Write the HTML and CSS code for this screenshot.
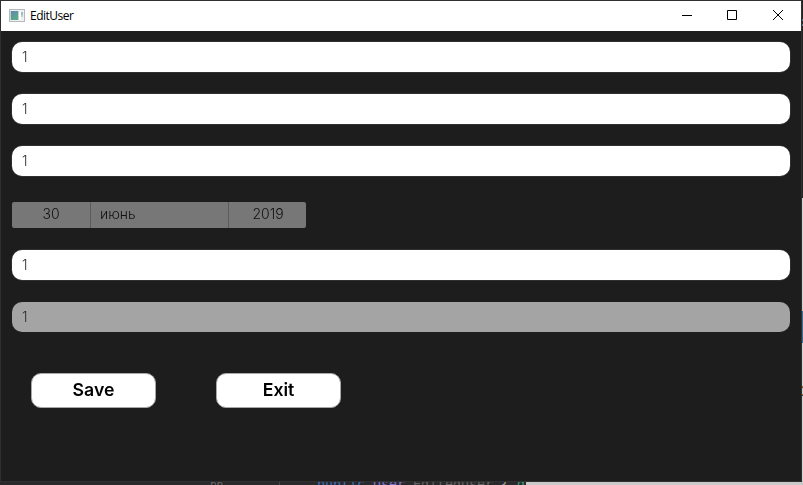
FILE: index.html
```
<!DOCTYPE html>
<html lang="ru">
<head>
<meta charset="utf-8">
<title>EditUser</title>
<link rel="stylesheet" href="styles.css">
</head>
<body>
<div class="desktop">
  <div class="side"><div class="side-dark"><span class="colon">:</span></div><div class="side-light"><div class="side-blue"></div><span class="side-num">2</span></div></div>
  <div class="code"><div class="code-dark"><span class="lineno">bb</span><span class="guide"></span><span class="kw">public</span><span class="type">User</span><span class="name">EditedUser</span><span class="brace">{</span><span class="getter">g</span></div><div class="code-light"></div></div>
  <main class="window">
    <header class="titlebar">
      <svg class="app-icon" width="16" height="13" viewBox="0 0 16 13">
        <defs><linearGradient id="g" x1="0" y1="0" x2="0.6" y2="1"><stop offset="0" stop-color="#6286b8"/><stop offset="1" stop-color="#58ad80"/></linearGradient></defs>
        <path fill="#b5b9bd" d="M0 0h16v13H0z"/><path fill="#eef0f1" d="M1 1h14v11H1z"/>
        <path fill="#c9d0d4" d="M1 2h9v9H1z"/><path fill="url(#g)" d="M2 2h7v9H2z"/><path fill="#fff" d="M10 3h2v8h-2z"/><path fill="#9fb8cc" d="M12 3h2v3h-2z"/><path fill="#b3d4bd" d="M12 6h2v2h-2z"/>
      </svg>
      <span class="title">EditUser</span>
      <svg class="controls" width="138" height="30" viewBox="0 0 138 30" fill="none" stroke="#000" stroke-width="1">
        <path d="M19 14.5h10"/><path d="M64.5 9.5h9v9h-9z"/><path d="M110 9l10 10M120 9l-10 10"/>
      </svg>
    </header>
    <form class="form">
      <div class="field">1</div>
      <div class="field">1</div>
      <div class="field">1</div>
      <div class="date"><span class="day">30</span><span class="month">июнь</span><span class="year">2019</span></div>
      <div class="field">1</div>
      <div class="field disabled">1</div>
      <div class="actions"><button type="button">Save</button><button type="button">Exit</button></div>
    </form>
  </main>
</div>
</body>
</html>
```
FILE: styles.css
```
* { box-sizing: border-box; }
body { margin: 0; overflow: hidden; font-family: Inter, sans-serif; }
.desktop { position: relative; width: 803px; height: 485px; background: #29292b; overflow: hidden; }
.window { position: absolute; left: 1px; top: 1px; width: 800px; height: 480px; background: #1d1d1d; box-shadow: 0 0 0 1px #303030; }
.titlebar { display: flex; align-items: center; height: 30px; padding-left: 8px; background: #fff; }
.app-icon { margin-top: -1px; }
.title { margin-left: 5px; font: 12px/16px "Open Sans", sans-serif; letter-spacing: -0.5px; color: #000; }
.controls { margin-left: auto; }
.form { display: flex; flex-direction: column; gap: 22px; margin: 0; padding: 11px 11px 0; font-size: 14px; will-change: transform; }
.field { height: 30px; padding-left: 10px; border-radius: 10px; background: #fff; box-shadow: 0 0 0 0.5px #444; color: #333; font-weight: 350; line-height: 30px; }
.disabled { background: #a4a4a4; box-shadow: none; color: #2b2b2b; }
.date { display: flex; width: 294px; height: 26px; margin: 4px 0 0; border-radius: 2px; background: #777; color: #111; font-weight: 350; line-height: 24px; }
.day { width: 79px; border-right: 1px solid #5c5c5c; text-align: center; }
.month { width: 138px; padding-left: 9px; border-right: 1px solid #5c5c5c; }
.year { flex: 1; padding-left: 1px; text-align: center; }
.actions { display: flex; gap: 60px; padding: 19px 0 0 19px; }
.actions button { width: 125px; height: 35px; padding: 0 0 2px; border: 1px solid #a8a8a8; border-radius: 10px; background: #fff; color: #000; font: 600 17.7px/31px Inter, sans-serif; }
.side { position: absolute; top: 0; right: 0; width: 3px; height: 485px; overflow: hidden; }
.side-dark { height: 198px; background: #242424; }
.colon { position: absolute; left: 1px; top: 13px; font-size: 13px; color: #888; }
.side-light { height: 287px; padding-top: 113px; background: #d2d2d2; border-left: 1px solid #777; }
.side-blue { height: 32px; background: #3e7097; }
.side-num { display: block; height: 53px; padding-top: 41px; border-bottom: 1px solid #333; font-size: 14px; line-height: 14px; color: #444; }
.code { position: absolute; left: 0; top: 481px; display: flex; width: 803px; height: 4px; overflow: hidden; }
.code-dark { display: flex; width: 526px; height: 4px; overflow: hidden; background: #29292b; font: 13.3px/16px "DejaVu Sans Mono", monospace; white-space: pre; }
.code-dark span { margin-top: -4px; }
.lineno { width: 69px; margin-left: 210px; font-size: 11px; color: #686868; }
.guide { width: 1px; height: 16px; background: #454545; }
.kw { width: 56px; margin-left: 37px; color: #3d70bf; }
.type { width: 40px; color: #7d70cb; }
.name { width: 88px; color: #626262; }
.brace { width: 16px; color: #999; }
.getter { color: #36967d; }
.code-light { flex: 1; background: #c9c9c9; }
```
